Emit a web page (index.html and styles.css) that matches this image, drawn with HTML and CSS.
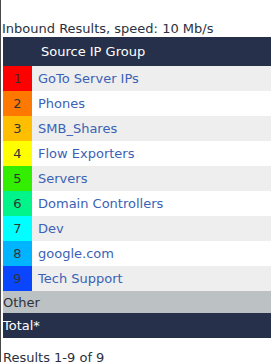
FILE: index.html
```html
<!DOCTYPE html>
<html>
<head>
<meta charset="utf-8">
<link rel="stylesheet" href="styles.css">
</head>
<body>
<div class="frame">
  <div class="title">Inbound Results, speed: 10 Mb/s</div>
  <div class="table">
    <div class="row head"><span class="num"></span><span class="label">Source IP Group</span></div>
    <div class="row odd"><span class="num c1">1</span><span class="label">GoTo Server IPs</span></div>
    <div class="row even"><span class="num c2">2</span><span class="label">Phones</span></div>
    <div class="row odd"><span class="num c3">3</span><span class="label">SMB_Shares</span></div>
    <div class="row even"><span class="num c4">4</span><span class="label">Flow Exporters</span></div>
    <div class="row odd"><span class="num c5">5</span><span class="label">Servers</span></div>
    <div class="row even"><span class="num c6">6</span><span class="label">Domain Controllers</span></div>
    <div class="row odd"><span class="num c7">7</span><span class="label">Dev</span></div>
    <div class="row even"><span class="num c8">8</span><span class="label">google.com</span></div>
    <div class="row odd"><span class="num c9">9</span><span class="label">Tech Support</span></div>
    <div class="row other">Other</div>
    <div class="row total">Total*</div>
  </div>
  <div class="footer">Results 1-9 of 9</div>
</div>
</body>
</html>
```

FILE: styles.css
```css
html, body {
  margin: 0;
  padding: 0;
  background: #ffffff;
}
body {
  font-family: "DejaVu Sans", Verdana, sans-serif;
  font-size: 12px;
  color: #2b3140;
}
.frame {
  border-left: 1px solid #4a4a4a;
  padding-left: 2px;
  padding-top: 20px;
  min-height: 362px;
  box-sizing: border-box;
}
.title {
  height: 17px;
  line-height: 17px;
  font-size: 13px;
  margin-left: -1px;
}
.table {
  display: flex;
  flex-direction: column;
}
.row {
  display: flex;
  align-items: center;
  height: 25px;
  font-size: 13px;
}
.head {
  height: 29px;
  background: #27304a;
  color: #ffffff;
}
.num {
  width: 29px;
  height: 100%;
  display: flex;
  align-items: center;
  justify-content: center;
  color: #333333;
}
.label {
  padding-left: 6px;
  color: #3b62b5;
}
.head .label {
  color: #ffffff;
  padding-left: 9px;
}
.odd { background: #eeeeee; }
.even { background: #ffffff; }
.c1 { background: #ff0000; }
.c2 { background: #ff7800; }
.c3 { background: #ffbf00; }
.c4 { background: #ffff00; }
.c5 { background: #33ee00; }
.c6 { background: #00f48a; }
.c7 { background: #00ffff; }
.c8 { background: #00b4ff; }
.c9 { background: #0a46ff; }
.other {
  height: 22px;
  background: #bcc1c3;
  color: #2b3140;
}
.total {
  height: 25px;
  background: #27304a;
  color: #ffffff;
}
.footer {
  margin-top: 12px;
  font-size: 13px;
  line-height: 16px;
}
```
